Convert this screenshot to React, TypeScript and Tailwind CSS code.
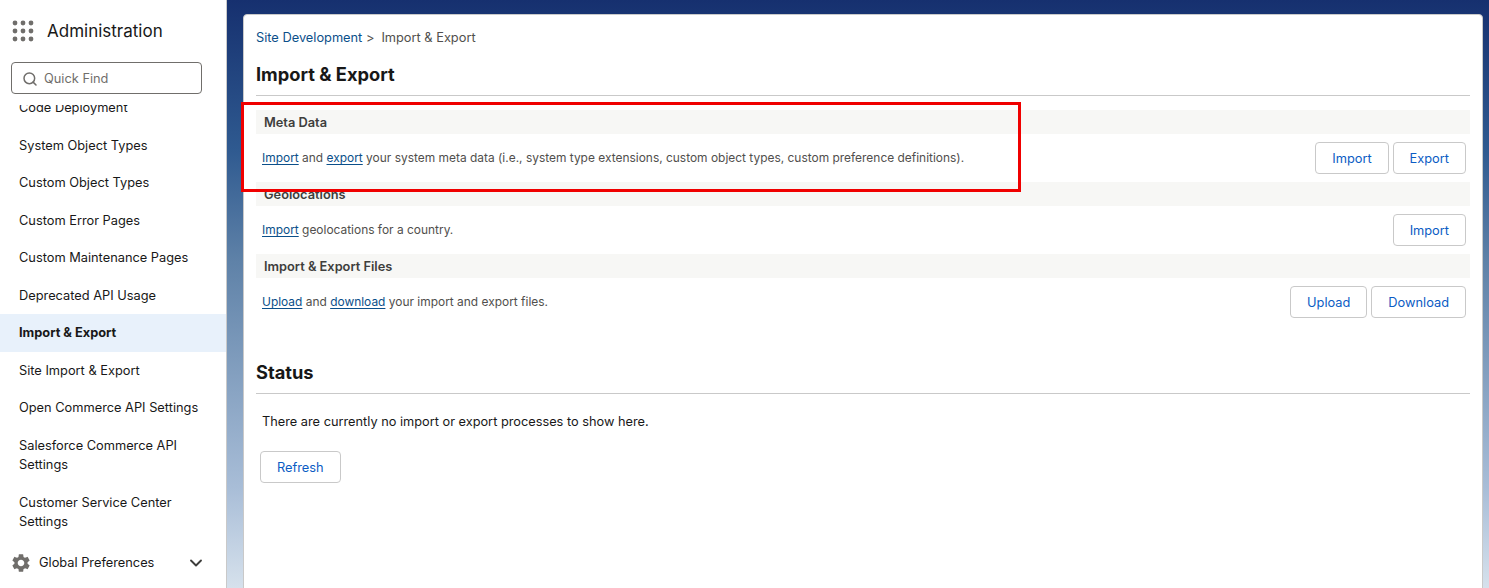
import React from 'react';
import { ChevronDown, Search } from 'lucide-react';
import { MdSettings } from 'react-icons/md';

const navItems = [
  'Code Deployment',
  'System Object Types',
  'Custom Object Types',
  'Custom Error Pages',
  'Custom Maintenance Pages',
  'Deprecated API Usage',
  'Import & Export',
  'Site Import & Export',
  'Open Commerce API Settings',
  'Salesforce Commerce API Settings',
  'Customer Service Center Settings',
];

const Btn = ({ label }: { label: string }) => (
  <button className="h-[32px] rounded-[4px] border border-[#c9c9c9] bg-white px-4 pt-[1px] text-[12.8px] text-[#0b5cc4]">
    {label}
  </button>
);

const Link = ({ label }: { label: string }) => (
  <a className="text-[#0b4f8a] underline underline-offset-2">{label}</a>
);

const Section = ({
  title,
  children,
  buttons,
}: {
  title: string;
  children: React.ReactNode;
  buttons: string[];
}) => (
  <div>
    <div className="flex h-[24px] items-center bg-[#f7f7f5] px-2 pt-[1px] text-[12.8px] font-semibold text-[#3e3e3c]">
      {title}
    </div>
    <div className="flex h-[48px] items-center justify-between pl-[6px] pr-1 text-[11.95px] text-[#514f4d]">
      <p>{children}</p>
      <div className="flex gap-1">
        {buttons.map((b) => (
          <Btn key={b} label={b} />
        ))}
      </div>
    </div>
  </div>
);

export default function App() {
  return (
    <div className="relative flex h-[588px] w-[1489px] overflow-hidden bg-white font-['Inter',sans-serif] text-[#181818]">
      <aside className="flex h-full w-[227px] flex-none flex-col border-r border-[#c9c9c9] bg-white">
        <div className="flex h-[62px] flex-none items-center pl-[12px]">
          <svg width="22" height="22" viewBox="0 0 22 22" fill="#706e6b" className="-mt-[1px]">
            {[3, 11, 19].map((y) =>
              [3, 11, 19].map((x) => <circle key={`${x}-${y}`} cx={x} cy={y} r="2.4" />),
            )}
          </svg>
          <span className="ml-[13px] pt-[1px] text-[17px] text-[#181818]">Administration</span>
        </div>
        <div className="flex-none pl-[11px] pr-[24px]">
          <div className="flex h-[32px] items-center rounded-[4px] border border-[#706e6b] bg-white pl-[10px] pt-[1px] text-[12.8px] text-[#706e6b]">
            <Search size={16} strokeWidth={2.25} className="mr-[6px] text-[#706e6b]" />
            Quick Find
          </div>
        </div>
        <div className="mt-[11px] min-h-0 flex-1 overflow-hidden">
          <ul className="-mt-[16px]">
            {navItems.map((item) => (
              <li
                key={item}
                className={
                  item === 'Import & Export'
                    ? 'bg-[#e8f1fb] py-[9px] pl-[19px] pr-4 text-[12.8px] leading-[19.5px] font-bold'
                    : 'py-[9px] pl-[19px] pr-4 text-[12.8px] leading-[19.5px]'
                }
              >
                {item}
              </li>
            ))}
          </ul>
        </div>
        <div className="flex h-[48px] flex-none items-center pb-[2px] pl-[10px] pr-[20px] text-[12.8px]">
          <MdSettings size={22} className="text-[#706e6b]" />
          <span className="ml-[7px] flex-1">Global Preferences</span>
          <ChevronDown size={20} strokeWidth={2.25} className="text-[#3e3e3c]" />
        </div>
      </aside>

      <main className="min-w-0 flex-1 bg-[linear-gradient(to_bottom,#16306f_0px,#2f5a90_150px,#5f82a8_262px,#a8bdd7_487px,#d6e1ec_588px)] pl-[16px] pr-[6px] pt-[14px]">
        <div className="h-[600px] rounded-t-[4px] border border-[#c9c9c9] bg-white pl-[12px] pr-[12px]">
          <div className="pt-[14px] text-[12.8px] leading-[17px] text-[#514f4d]">
            <a className="text-[#0b4f8a]">Site Development</a>
            <span> &gt;</span>
            <span className="ml-[7px]">Import &amp; Export</span>
          </div>
          <h1 className="mt-[17px] border-b border-[#c9c9c9] pb-[9px] text-[18.25px] leading-[23px] font-bold text-[#181818]">
            Import &amp; Export
          </h1>
          <div className="mt-[14px]">
            <Section title="Meta Data" buttons={['Import', 'Export']}>
              <Link label="Import" /> and <Link label="export" /> your system meta data (i.e., system
              type extensions, custom object types, custom preference definitions).
            </Section>
            <Section title="Geolocations" buttons={['Import']}>
              <Link label="Import" /> geolocations for a country.
            </Section>
            <Section title="Import & Export Files" buttons={['Upload', 'Download']}>
              <Link label="Upload" /> and <Link label="download" /> your import and export files.
            </Section>
          </div>
          <h2 className="mt-[35px] border-b border-[#c9c9c9] pb-[9px] text-[18.25px] leading-[23px] font-bold text-[#181818]">
            Status
          </h2>
          <p className="mt-[19px] pl-[6px] text-[12.77px] leading-[18px] text-[#181818]">
            There are currently no import or export processes to show here.
          </p>
          <div className="mt-[20px] pl-[4px]">
            <Btn label="Refresh" />
          </div>
        </div>
      </main>

      <div className="absolute left-[241px] top-[102px] h-[90px] w-[780px] border-[3px] border-[#f00000]" />
    </div>
  );
}
